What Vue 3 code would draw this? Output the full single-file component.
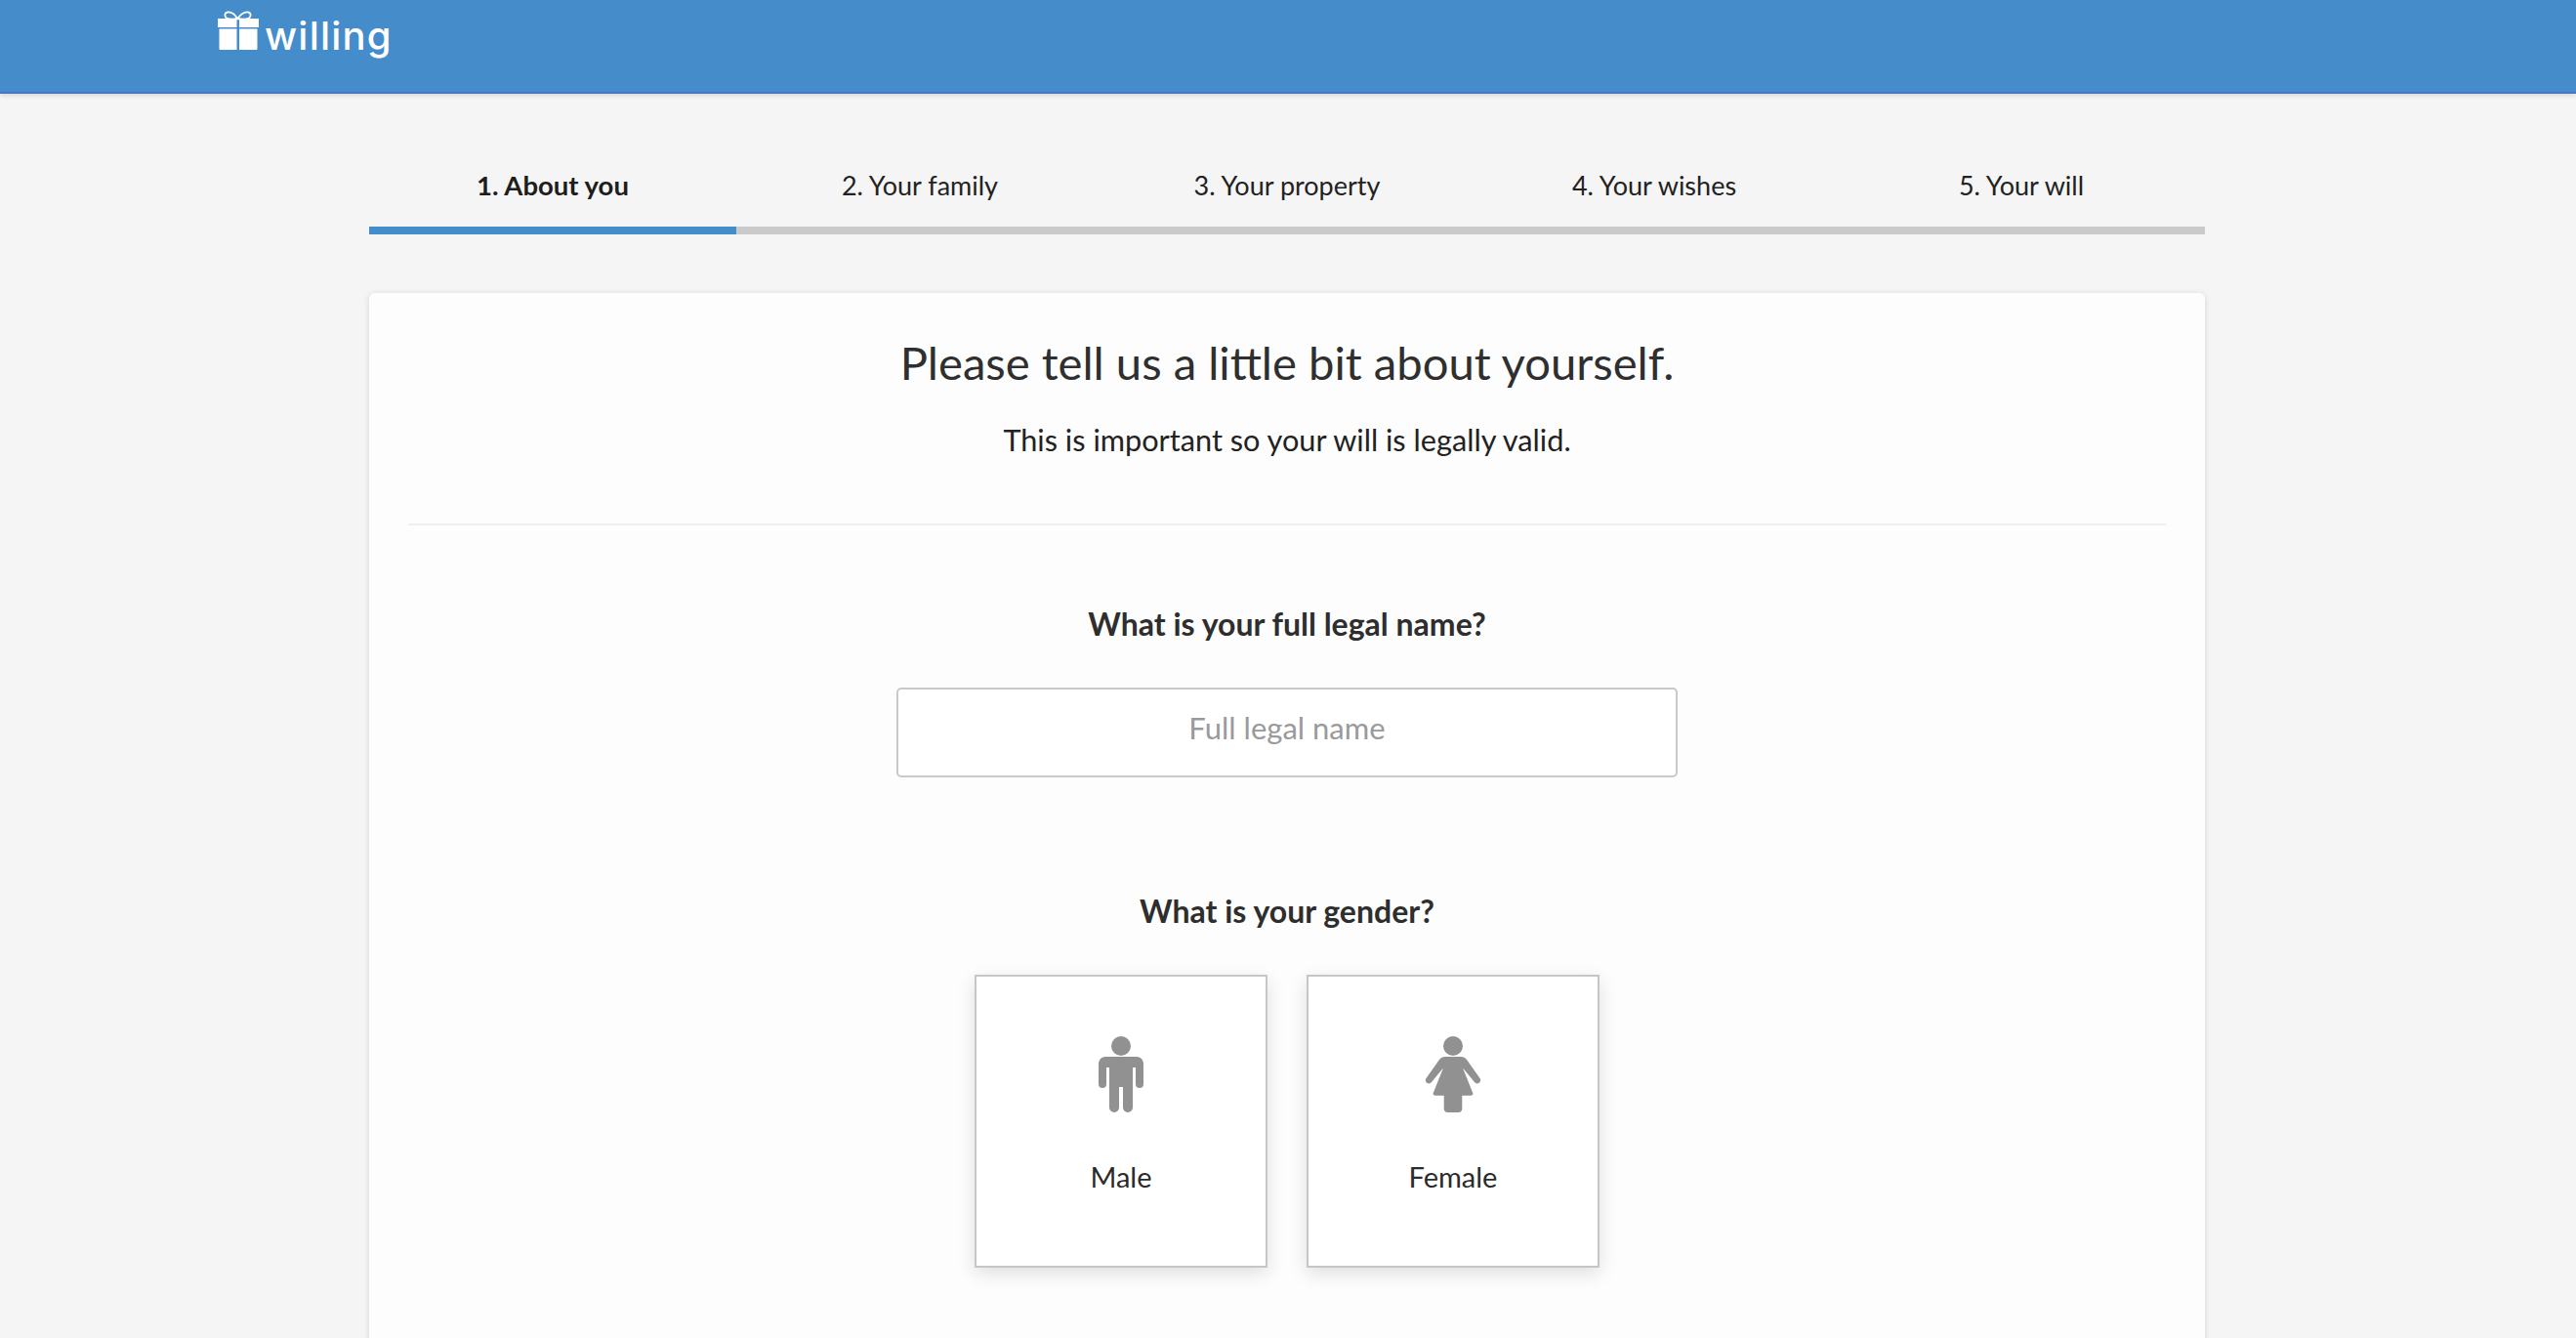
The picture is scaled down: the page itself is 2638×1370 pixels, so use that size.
<script setup>
const steps = ['1. About you', '2. Your family', '3. Your property', '4. Your wishes', '5. Your will']
</script>

<template>
  <div class="page">
    <header class="topbar">
      <div class="logo">
        <svg class="gift" width="44" height="42" viewBox="0 0 44 42" aria-hidden="true">
          <path d="M21.3 8C18 3 14 1 11 1.500C8 2 7.500 5.500 10 7.500C13 9.300 18 8.700 21.300 8ZM21.300 8C25 3 29 1 32 1.500C35 2 35.500 5.500 33 7.500C30 9.300 25 8.700 21.300 8Z" fill="none" stroke="#fff" stroke-width="1.800"/>
          <path d="M1 8H20.500V17H1ZM23 8H43V17H23ZM2.500 18.500H20.500V40H3.500A1 1 0 0 1 2.500 39ZM23 18.500H41.500V39A1 1 0 0 1 40.500 40H23Z" fill="#fff"/>
        </svg>
        <span class="wordmark">willing</span>
      </div>
    </header>

    <main class="content">
      <nav class="steps">
        <div v-for="(step, i) in steps" :key="step" class="step" :class="{ active: i === 0 }">{{ step }}</div>
      </nav>

      <section class="card">
        <h1 class="title">Please tell us a little bit about yourself.</h1>
        <p class="subtitle">This is important so your will is legally valid.</p>
        <hr class="rule" />
        <div class="faint"></div>

        <h2 class="question first">What is your full legal name?</h2>
        <input class="name" type="text" placeholder="Full legal name" />

        <h2 class="question second">What is your gender?</h2>
        <div class="tiles">
          <button class="tile" type="button">
            <svg class="person" width="60" height="78" viewBox="0 0 60 78" aria-hidden="true">
              <circle cx="30" cy="10" r="10" fill="#919191"/>
              <path d="M14 21H46A7 7 0 0 1 53 28V49A4 4 0 0 1 45 49V32H42V73A5 5 0 0 1 32 73V52H28V73A5 5 0 0 1 18 73V32H15V49A4 4 0 0 1 7 49V28A7 7 0 0 1 14 21Z" fill="#919191"/>
            </svg>
            <span class="label">Male</span>
          </button>
          <button class="tile" type="button">
            <svg class="person" width="60" height="78" viewBox="0 0 60 78" aria-hidden="true">
              <circle cx="30" cy="10" r="10" fill="#919191"/>
              <path d="M22 21H38C40.500 21 42.500 22 44 24L57.500 43C60 47 54.500 50.500 52 47L40 32.500L50 57.500A2 2 0 0 1 48.500 60.700H39.300V74A4 4 0 0 1 35.300 78H24.700A4 4 0 0 1 20.700 74V60.700H11.500A2 2 0 0 1 10 57.500L20 32.500L8 47C5.500 50.500 0 47 2.500 43L16 24C17.500 22 19.500 21 22 21Z" fill="#919191"/>
            </svg>
            <span class="label">Female</span>
          </button>
        </div>
      </section>
    </main>
  </div>
</template>

<style>
html, body { margin: 0; height: 1370px; overflow: hidden; background: #f5f5f5; }
</style>

<style scoped>
.page {
  height: 1370px;
  overflow: hidden;
  background: #f5f5f5;
  font-family: Lato, "Liberation Sans", sans-serif;
  color: #2e2e2e;
}
.topbar {
  height: 94px;
  background: #458ccb;
  border-bottom: 2px solid #4a74c4;
  box-shadow: 0 2px 5px rgba(0, 0, 0, .12);
}
.logo {
  display: flex;
  align-items: flex-start;
  padding: 11px 0 0 222px;
}
.gift { display: block; flex: none; }
.wordmark {
  margin: 4px 0 0 5px;
  font-family: Inter, sans-serif;
  font-size: 40px;
  line-height: 44px;
  font-weight: 500;
  letter-spacing: 1.200px;
  color: #fff;
}
.content {
  width: 1880px;
  margin-left: 378px;
}
.steps {
  display: flex;
}
.step {
  box-sizing: border-box;
  width: 376px;
  height: 144px;
  padding-top: 78px;
  border-bottom: 8px solid #cacaca;
  text-align: center;
  font-size: 27px;
  line-height: 32px;
  color: #222;
}
.step.active {
  border-bottom-color: #458ccb;
  font-size: 27.500px;
  font-weight: 700;
  color: #1d1d1d;
}
.card {
  margin-top: 60px;
  height: 1100px;
  box-sizing: border-box;
  padding: 44px 40px 0;
  background: #fdfdfd;
  border-radius: 6px;
  box-shadow: 0 1px 6px rgba(0, 0, 0, .14);
  text-align: center;
}
.title {
  margin: 0;
  font-size: 47.200px;
  line-height: 54px;
  font-weight: 400;
  color: #2f2f2f;
}
.subtitle {
  margin: 33px 0 0;
  font-size: 30.700px;
  line-height: 40px;
  color: #222;
}
.rule {
  margin: 65px 0 0;
  height: 2px;
  border: 0;
  background: #efefef;
}
.faint {
  height: 1px;
  margin-top: 43px;
  background: #fbfbfb;
}
.question {
  margin: 0;
  font-size: 32px;
  line-height: 36px;
  font-weight: 700;
  color: #2e2e2e;
}
.question.first { margin-top: 39px; }
.question.second { margin-top: 119px; }
.name {
  display: block;
  box-sizing: border-box;
  width: 800px;
  height: 92px;
  margin: 47px auto 0;
  padding: 0 0 11px;
  background: #fff;
  border: 2px solid #c9c9c9;
  border-radius: 5px;
  outline: 0;
  text-align: center;
  font-family: inherit;
  font-size: 31px;
  color: #2e2e2e;
}
.name::placeholder { color: #9a9a9a; opacity: 1; }
.tiles {
  display: flex;
  justify-content: center;
  gap: 40px;
  margin-top: 47px;
}
.tile {
  display: flex;
  flex-direction: column;
  align-items: center;
  box-sizing: border-box;
  width: 300px;
  height: 300px;
  padding: 61px 0 0;
  background: #fff;
  border: 2px solid #c6c6c6;
  border-radius: 0;
  box-shadow: 0 6px 18px rgba(0, 0, 0, .12);
  font-family: inherit;
}
.person { display: block; overflow: visible; }
.label {
  margin-top: 48px;
  font-size: 29px;
  line-height: 36px;
  color: #2b2b2b;
}
</style>
